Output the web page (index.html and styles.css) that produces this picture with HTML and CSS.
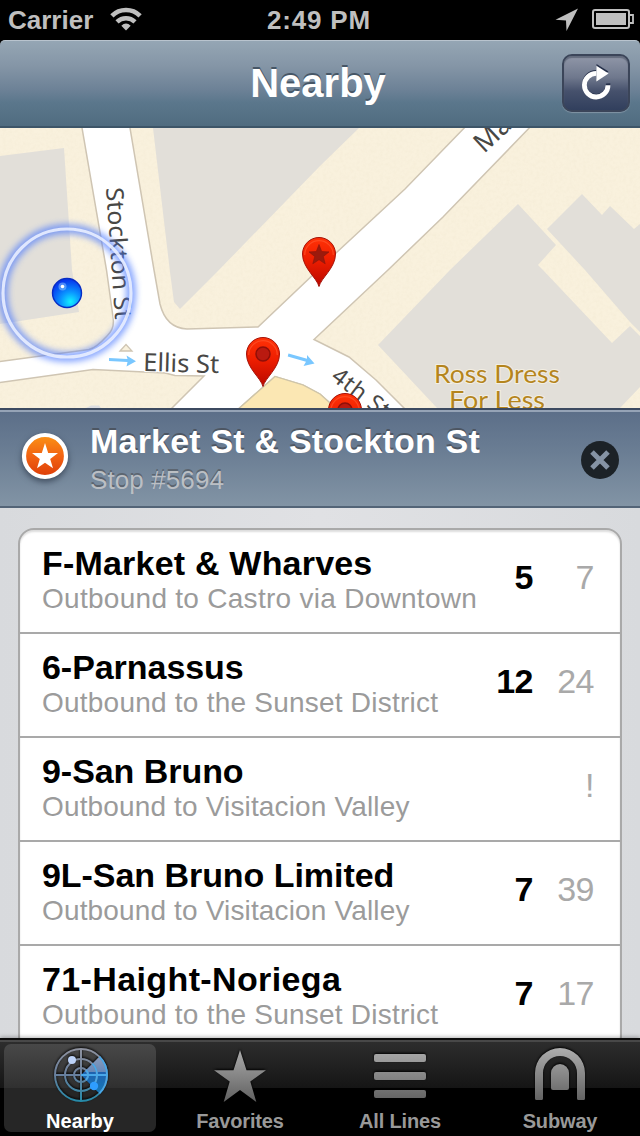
FILE: index.html
```html
<!DOCTYPE html>
<html lang="en">
<head>
<meta charset="utf-8">
<title>Nearby</title>
<link rel="stylesheet" href="styles.css">
</head>
<body>
<div class="screen">
  <header class="status">
    <div class="status-left">
      <span>Carrier</span>
      <svg class="wifi" width="32" height="24" viewBox="0 0 32 24" fill="none" stroke="#bfbfbf">
        <path d="M1.900 8.800A20 20 0 0 1 30.100 8.800" stroke-width="4.600"/>
        <path d="M7 14.900A12.800 12.800 0 0 1 25 14.900" stroke-width="4.400"/>
        <path d="M16 23.500L11.300 18.700Q16 14.200 20.700 18.700Z" fill="#bfbfbf" stroke="none"/>
      </svg>
    </div>
    <span class="clock">2:49 PM</span>
    <div class="status-right">
      <svg width="24" height="24" viewBox="0 0 24 24"><path d="M23 0.500L11.500 23L11 12.500L0.500 11.800Z" fill="#bfbfbf"/></svg>
      <svg width="42" height="20" viewBox="0 0 42 20">
        <rect x="1" y="1" width="36" height="18" rx="2" fill="none" stroke="#bfbfbf" stroke-width="2"/>
        <rect x="4" y="4" width="30" height="12" fill="#bfbfbf"/>
        <path d="M38 6H41V14H38" fill="none" stroke="#bfbfbf" stroke-width="1.800"/>
      </svg>
    </div>
  </header>

  <div class="nav-wrap">
    <nav class="nav">
      <h1>Nearby</h1>
      <button class="refresh" aria-label="Refresh">
        <svg width="34" height="40" viewBox="0 0 34 40">
          <path d="M28.200 22.300A12 12 0 1 1 16.400 11" fill="none" stroke="#26304a" stroke-width="4.200"/>
          <path d="M16.500 3L28.500 10.600L16.500 18Z" fill="#26304a"/>
          <path d="M28 24.200A11.800 11.800 0 1 1 16.400 12.400" fill="none" stroke="#fff" stroke-width="4.800"/>
          <path d="M16.400 4.800L28.600 12.600L16.400 20.400Z" fill="#fff"/>
        </svg>
      </button>
    </nav>
  </div>

  <svg class="map" width="640" height="280" viewBox="0 128 640 280">
    <defs>
      <filter id="paper" x="0" y="0" width="100%" height="100%">
        <feTurbulence type="fractalNoise" baseFrequency=".3" numOctaves="3" seed="4"/>
        <feColorMatrix values="0 0 0 0 .6  0 0 0 0 .5  0 0 0 0 .3  .35 0 0 0 -.13"/>
      </filter>
      <filter id="soft" x="-30%" y="-30%" width="160%" height="160%"><feGaussianBlur stdDeviation="3"/></filter>
      <linearGradient id="pinFill" x1="0" y1="0" x2="0" y2="1">
        <stop offset="0" stop-color="#ff3207"/><stop offset=".45" stop-color="#ee1e00"/><stop offset="1" stop-color="#b90800"/>
      </linearGradient>
      <radialGradient id="dotFill" cx=".62" cy=".8" r=".75">
        <stop offset="0" stop-color="#13f0ff"/><stop offset=".45" stop-color="#0a95ff"/><stop offset="1" stop-color="#0638ee"/>
      </radialGradient>
      <g id="pin">
        <path d="M0 32.500C-2 24-16.500 14-16.500 0A16.500 16.500 0 0 1 16.500 0C16.500 14 2 24 0 32.500Z" fill="url(#pinFill)" stroke="#a51208" stroke-width="1"/>
        <path d="M-14.300 1A14.300 14.300 0 0 1 14.300 1" fill="none" stroke="#ff5a32" stroke-width="1.300" opacity=".6"/>
      </g>
    </defs>
    <rect y="128" width="640" height="280" fill="#f9f1dd"/>
    <rect y="128" width="640" height="280" filter="url(#paper)" opacity=".35"/>
    <g fill="#e2dfd9">
      <path d="M0 156L64 148L72 270L79 312L0 324Z"/>
      <path d="M153 128L170 272L174 302L180 309L217 272L320 166L359 128Z"/>
      <path d="M518 204L556 245L538 265L543 270L612 343L630 326L640 336V387L620 408H437L378 345L450 270Z"/>
      <path d="M547 229L582 194L602 215L610 206L634 229L640 224V332L630 322L585 270Z"/>
      <path d="M86 408L91 405.500H99L101 408Z" fill="#dcdde0"/>
    </g>
    <path d="M81 122L106.500 270L113 317Q115 329 107 336Q96 348 89 349.500L-4 362V383L93 369.500L165 373L175 375.500L204 376L168 412H235L275 376.500L303 385L320 394L340 412H408L376 380L349 357L314 339.500L388 270L443 217L535 122H470L405 189L336 253L258 327L187 329Q166 328 160 304L154 270L129 122Z" fill="#fff" stroke="#cfc5b3" stroke-width="1.500"/>
    <path d="M235 412L275 376.500L303 385L320 394L340 412Z" fill="#fbe7b3" stroke="#cfc5a8" stroke-width="1.300"/>
    <path d="M120 351L126 344.500L132 351Z" fill="#f9f1dc" stroke="#cfc5b3" stroke-width="1.300"/>
    <g fill="#79c7ff">
      <path d="M109 358L127.500 359L126.500 355.500L136 361.300L126.500 366.500L127.500 362L109 361Z"/>
      <path d="M288.500 353.500L307 358.800L307 355L314.500 363.500L303.500 366L306 361.800L287.700 356.400Z"/>
    </g>
    <g class="street">
      <text transform="translate(106 188) rotate(86)" font-size="24" textLength="132" lengthAdjust="spacingAndGlyphs">Stockton St</text>
      <text transform="translate(143 371) rotate(1.500)" font-size="25" textLength="76" lengthAdjust="spacingAndGlyphs">Ellis St</text>
      <text transform="translate(484 154) rotate(-43)" font-size="27">Market St</text>
      <text transform="translate(330 379) rotate(37)" font-size="23" letter-spacing=".8">4th St</text>
    </g>
    <g class="place">
      <text x="434" y="383" textLength="126" lengthAdjust="spacingAndGlyphs">Ross Dress</text>
      <text x="449" y="408.500" textLength="96" lengthAdjust="spacingAndGlyphs">For Less</text>
    </g>
    <circle cx="67" cy="293" r="64" fill="none" stroke="#4a78ff" stroke-width="10" opacity=".65" filter="url(#soft)"/>
    <circle cx="67" cy="293" r="64" fill="none" stroke="#e9eeff" stroke-width="3.200" opacity=".9"/>
    <circle cx="67" cy="293" r="14.500" fill="url(#dotFill)" stroke="#082cc4" stroke-width="1.400"/>
    <circle cx="62.500" cy="286.500" r="4" fill="#9fd2ff" opacity=".45"/>
    <circle cx="62.500" cy="286.500" r="1.800" fill="#fff"/>
    <use href="#pin" x="319" y="254"/>
    <path d="M319 244.500L321.700 251.500L329 251.900L323.300 256.500L325.200 263.800L319 259.700L312.800 263.800L314.700 256.500L309 251.900L316.300 251.500Z" fill="#9b1a0c" stroke="#8a140a" stroke-width=".6"/>
    <use href="#pin" x="263" y="354"/>
    <circle cx="263" cy="354" r="7" fill="#b91a10" stroke="#8f0f08" stroke-width="1.500"/>
    <use href="#pin" x="345" y="410"/>
    <circle cx="345" cy="410" r="7" fill="#b91a10" stroke="#8f0f08" stroke-width="1.500"/>
  </svg>

  <section class="stop">
    <svg class="stop-badge" width="54" height="58" viewBox="0 0 54 58">
      <defs><linearGradient id="orange" x1="0" y1="0" x2="0" y2="1"><stop offset="0" stop-color="#fb9315"/><stop offset=".5" stop-color="#f26312"/><stop offset="1" stop-color="#dc3c08"/></linearGradient></defs>
      <circle cx="27" cy="27" r="21" fill="url(#orange)" stroke="#fff" stroke-width="4.200"/>
      <path d="M27 14L30.200 24H40L32.200 30L35 39.200L27 33.700L19 39.200L21.800 30L14 24H23.800Z" fill="#fff"/>
    </svg>
    <div class="stop-text">
      <h2>Market St &amp; Stockton St</h2>
      <p>Stop #5694</p>
    </div>
    <svg class="close" width="38" height="38" viewBox="0 0 38 38">
      <circle cx="19" cy="19" r="19" fill="#1c2227"/>
      <path d="M11 11L27 27M27 11L11 27" stroke="#8593a4" stroke-width="5"/>
    </svg>
  </section>

  <main class="list">
    <div class="card">
      <div class="row"><div class="line"><h3>F-Market &amp; Wharves</h3><p>Outbound to Castro via Downtown</p></div><b>5</b><i>7</i></div>
      <div class="row"><div class="line"><h3 class="snug">6-Parnassus</h3><p class="even">Outbound to the Sunset District</p></div><b>12</b><i>24</i></div>
      <div class="row"><div class="line"><h3 class="snug">9-San Bruno</h3><p class="snug">Outbound to Visitacion Valley</p></div><i>!</i></div>
      <div class="row"><div class="line"><h3 class="snug">9L-San Bruno Limited</h3><p class="snug">Outbound to Visitacion Valley</p></div><b>7</b><i>39</i></div>
      <div class="row"><div class="line"><h3 class="loose">71-Haight-Noriega</h3><p class="even">Outbound to the Sunset District</p></div><b>7</b><i>17</i></div>
    </div>
  </main>

  <footer class="tabs">
    <div class="tab active">
      <svg width="60" height="60" viewBox="0 0 60 60">
        <defs>
          <linearGradient id="radar" gradientUnits="userSpaceOnUse" x1="0" y1="3" x2="0" y2="57"><stop offset="0" stop-color="#90939f"/><stop offset=".5" stop-color="#687f9d"/><stop offset="1" stop-color="#248aa8"/></linearGradient>
          <linearGradient id="sweep" x1="0" y1="0" x2="0" y2="1"><stop offset="0" stop-color="#8b9cba"/><stop offset=".42" stop-color="#6588ba"/><stop offset=".43" stop-color="#1e62b0"/><stop offset="1" stop-color="#1679b8"/></linearGradient>
        </defs>
        <path d="M31 30L49.400 11.600A26 26 0 0 1 49.400 48.400Z" fill="url(#sweep)"/>
        <g fill="none" stroke="url(#radar)" stroke-width="2">
          <circle cx="31" cy="30" r="26"/><circle cx="31" cy="30" r="16"/><circle cx="31" cy="30" r="7"/>
        </g>
        <path d="M30 4h2v52h-2zM5 29h52v2H5z" fill="url(#radar)"/>
        <path d="M49.400 11.600A26 26 0 0 1 49.400 48.400M42.300 18.700A16 16 0 0 1 42.300 41.300M36 25A7 7 0 0 1 36 35M31 30H57" fill="none" stroke="#49a7e8" stroke-width="1.800"/>
        <circle cx="22" cy="15" r="4" fill="#bcd2f7"/><circle cx="44" cy="41" r="4.200" fill="#2e9dff"/>
      </svg>
      <span>Nearby</span>
    </div>
    <div class="tab">
      <svg width="60" height="60" viewBox="0 0 60 60">
        <defs><linearGradient id="gray" gradientUnits="userSpaceOnUse" x1="0" y1="4" x2="0" y2="57"><stop offset="0" stop-color="#acacac"/><stop offset="1" stop-color="#606060"/></linearGradient></defs>
        <path d="M30 5L36.500 25.300H56L40.300 36.500L46.300 57L30 45L13.700 57L19.700 36.500L4 25.300H23.500Z" fill="url(#gray)"/>
      </svg>
      <span class="tight">Favorites</span>
    </div>
    <div class="tab">
      <svg width="60" height="60" viewBox="0 0 60 60"><g fill="url(#gray)"><rect x="4" y="9" width="52" height="8" rx="2"/><rect x="4" y="27" width="52" height="8" rx="2"/><rect x="4" y="45" width="52" height="8" rx="2"/></g></svg>
      <span class="tight">All Lines</span>
    </div>
    <div class="tab">
      <svg width="60" height="60" viewBox="0 0 60 60"><g fill="url(#gray)">
        <path d="M5 28A25 25 0 0 1 55 28V53.500Q55 55 53.500 55H48.500Q47 55 47 53.500V28A17 17 0 0 0 13 28V53.500Q13 55 11.500 55H6.500Q5 55 5 53.500Z"/>
        <path d="M21 28A9 9 0 0 1 39 28V43Q39 45 37 45H23Q21 45 21 43Z"/></g></svg>
      <span class="tight">Subway</span>
    </div>
  </footer>
</div>
</body>
</html>
```

FILE: styles.css
```css
* { box-sizing: border-box; margin: 0; padding: 0; }
body { background: #000; font-family: "Liberation Sans", Arial, sans-serif; }
svg { display: block; }
.screen { width: 640px; height: 1136px; display: flex; flex-direction: column; overflow: hidden; }

.status {
  height: 40px; flex: none; display: grid; grid-template-columns: 1fr auto 1fr;
  padding: 0 6px 0 8px; background: #000; color: #bfbfbf;
  font-size: 26px; font-weight: bold; line-height: 40px;
}
.status-left { display: flex; gap: 17px; }
.wifi { margin-top: 7px; }
.clock { letter-spacing: .8px; margin-right: 4px; }
.status-right { display: flex; justify-content: flex-end; align-items: flex-start; gap: 13px; padding-top: 8px; }
.status-right svg + svg { margin-top: 1px; }

.nav-wrap { flex: none; height: 88px; background: #000; }
.nav {
  height: 88px; display: grid; grid-template-columns: 1fr auto 1fr; align-items: center;
  padding: 0 10px; border-radius: 5px 5px 0 0;
  border-top: 1px solid #b9c4ce; border-bottom: 2px solid #3d5568;
  background: linear-gradient(#95a6b4, #8495a6 30%, #6c8196 58%, #5b778c 72%, #506c80);
}
.nav h1 {
  grid-column: 2; margin: -1px 4px 0 0; color: #fff; font-size: 40px; line-height: 40px; text-shadow: 0 -2px 0 #465666;
}
.refresh {
  justify-self: end; width: 68px; height: 58px; margin-top: -1px;
  border: 2px solid #3b4559; border-radius: 10px;
  background: linear-gradient(#9097a8, #6f788d 40%, #46516c 65%, #313f5d);
  box-shadow: inset 0 2px 1px #636b7d, 0 1px 1px #8295a5;
  display: flex; align-items: center; justify-content: center;
}
.refresh svg { margin: -5px 0 0 2px; }

.map { flex: none; }
.street { font-family: "Noto Sans", sans-serif; fill: #484745; stroke: #fff; stroke-width: 2px; paint-order: stroke; }
.place { font-family: Lato, sans-serif; font-size: 24.5px; fill: #b5851d; stroke: #f3eee2; stroke-width: 2px; paint-order: stroke; }

.stop {
  flex: none; height: 100px; display: flex; padding: 0 21px 0 18px;
  border-top: 2px solid #3c4a60; border-bottom: 2px solid #536477;
  background: linear-gradient(#5b6e88, #6b7e94 45%, #8294a5);
  box-shadow: inset 0 2px 0 #95a3b6;
}
.stop-badge { margin-top: 19px; filter: drop-shadow(0 3px 3px rgba(20, 30, 45, .55)); }
.stop-text { flex: 1; padding: 13px 0 0 18px; }
.stop-text h2 { color: #fff; font-size: 34px; line-height: 36px; letter-spacing: .2px; text-shadow: 0 -2px 0 #4d5662; }
.stop-text p { margin-top: 6px; color: #bbbfc4; font-size: 26px; line-height: 30px; letter-spacing: .1px; text-shadow: 0 -2px 0 #5c6570; }
.close { margin-top: 31px; }

.list { flex: none; height: 530px; padding: 20px 18px 0; overflow: hidden; background: linear-gradient(90deg, #d8dadd, #e0e1e4 50%, #d8dadd); }
.card { border: 2px solid #a9a9a9; border-radius: 16px; background: #fff; box-shadow: inset 0 2px 2px #ddd; }
.row { height: 104px; display: flex; padding: 15px 26px 0 22px; border-bottom: 2px solid #a9a9a9; }
.line { flex: 1; white-space: nowrap; }
.row h3 { color: #000; font-size: 34px; line-height: 36px; letter-spacing: .2px; }
.row p { margin-top: 1px; color: #9b9b9b; font-size: 28px; line-height: 34px; letter-spacing: .28px; }
.row h3.snug { letter-spacing: -.05px; }
.row h3.loose { letter-spacing: .38px; }
.row p.even { letter-spacing: .23px; }
.row p.snug { letter-spacing: .15px; }
.row b, .row i { padding-top: 12px; font-size: 34px; line-height: 40px; text-align: right; }
.row b { color: #000; letter-spacing: -.5px; }
.row i { width: 61px; color: #a9a9a9; font-style: normal; font-weight: normal; letter-spacing: -.5px; }

.tabs {
  flex: none; height: 98px; display: grid; grid-template-columns: repeat(4, 160px);
  padding-top: 4px; border-top: 2px solid #0b0b0b;
  background: linear-gradient(#484848 0, #484848 2px, #2d2d2d 2px, #151515 48px, #000 48px);
  box-shadow: 0 -1px 4px rgba(0, 0, 0, .3);
}
.tab { display: flex; flex-direction: column; align-items: center; height: 88px; margin: 0 4px; border-radius: 7px; color: #999; }
.tab svg { margin-top: 1px; height: 60px; flex: none; filter: drop-shadow(0 -1px 1px #000); }
.tab span { margin-top: 4px; font-size: 20px; font-weight: bold; line-height: 24px; }
.tab .tight { letter-spacing: -.15px; }
.active { color: #fff; background: linear-gradient(#484848, #303030 44px, #262626 44px); }
```
